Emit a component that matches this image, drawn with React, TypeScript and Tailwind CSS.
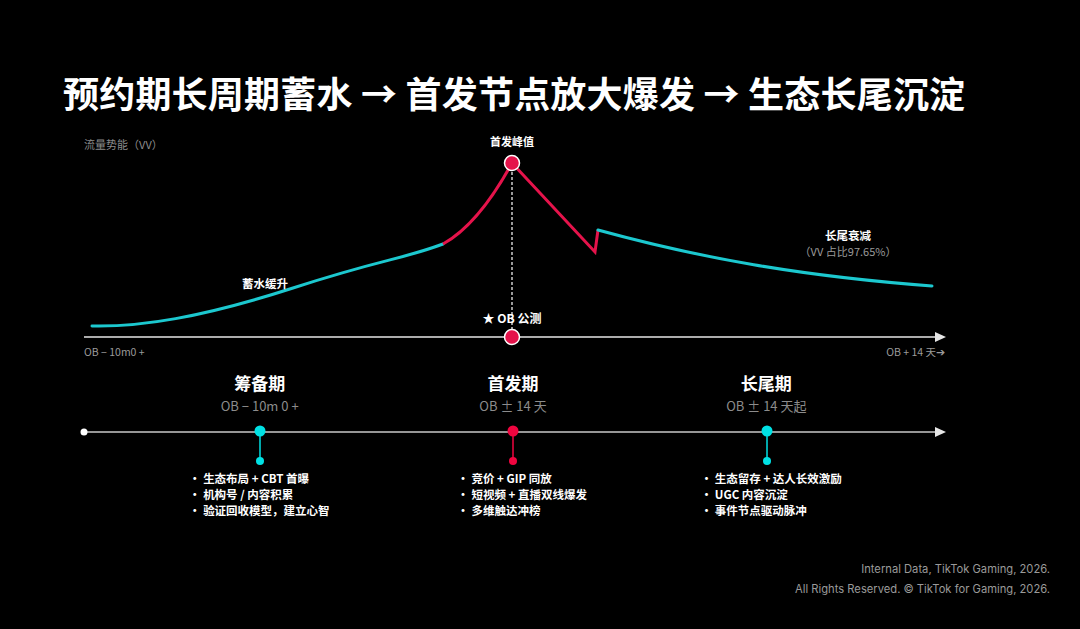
import React from 'react'

const CYAN = '#1cc8cf'
const RED = '#e5134b'

const phases = [
  {
    title: '筹备期',
    sub: 'OB − 10m 0 +',
    offset: 'ml-[56px]',
    items: ['生态布局 + CBT 首曝', '机构号 / 内容积累', '验证回收模型，建立心智'],
  },
  {
    title: '首发期',
    sub: 'OB ± 14 天',
    offset: 'ml-[71px]',
    items: ['竞价 + GIP 同放', '短视频 + 直播双线爆发', '多维触达冲榜'],
  },
  {
    title: '长尾期',
    sub: 'OB ± 14 天起',
    offset: 'ml-[61px]',
    items: ['生态留存 + 达人长效激励', 'UGC 内容沉淀', '事件节点驱动脉冲'],
  },
]

function TrafficChart() {
  return (
    <svg width={1080} height={230} viewBox="0 130 1080 230" className="block">
      <text x={84} y={149} fill="#8a8a8a" fontSize={11}>流量势能（VV）</text>

      {/* rising */}
      <path d="M92,326 C140,327 200,318 293,288 S400,260 443,244" fill="none" stroke={CYAN} strokeWidth={3} strokeLinecap="round" />
      {/* burst */}
      <path d="M443,244 C470,229 494,196 512,163 L595,252 L598,230" fill="none" stroke={RED} strokeWidth={3} strokeLinejoin="miter" />
      {/* long tail */}
      <path d="M598,230 C700,258 800,276 932,286" fill="none" stroke={CYAN} strokeWidth={3} strokeLinecap="round" />

      <line x1={512} y1={172} x2={512} y2={330} stroke="#ffffff" strokeWidth={1.2} strokeDasharray="3 2" />

      <line x1={84} y1={337} x2={938} y2={337} stroke="#e6e6e6" strokeWidth={1.5} />
      <polygon points="935,332 946,337 935,342" fill="#e6e6e6" />

      <circle cx={512} cy={163} r={7.5} fill={RED} stroke="#ffffff" strokeWidth={1.5} />
      <circle cx={512} cy={337} r={7.5} fill={RED} stroke="#ffffff" strokeWidth={1.5} />

      <text x={512} y={146} fill="#ffffff" fontSize={11} fontWeight={700} textAnchor="middle">首发峰值</text>
      <text x={512} y={323} fill="#ffffff" fontSize={12} fontWeight={700} textAnchor="middle">★ OB 公测</text>
      <text x={265} y={288} fill="#ffffff" fontSize={11.5} fontWeight={700} textAnchor="middle">蓄水缓升</text>
      <text x={848} y={240} fill="#ffffff" fontSize={11.5} fontWeight={700} textAnchor="middle">长尾衰减</text>
      <text x={848} y={256} fill="#9a9a9a" fontSize={11} textAnchor="middle">（VV 占比97.65%）</text>
      <text x={84} y={356} fill="#9a9a9a" fontSize={10.5}>OB − 10m0 +</text>
      <text x={945} y={356} fill="#9a9a9a" fontSize={10.5} textAnchor="end">OB + 14 天➔</text>
    </svg>
  )
}

function TimelineAxis() {
  const dots = [
    { x: 260, c: '#00e1e4' },
    { x: 513, c: '#f0053f' },
    { x: 767, c: '#00e1e4' },
  ]
  return (
    <svg width={1080} height={50} viewBox="0 420 1080 50" className="block">
      <line x1={84} y1={432} x2={938} y2={432} stroke="#c9c9c9" strokeWidth={1.5} />
      <polygon points="935,427 946,432 935,437" fill="#e6e6e6" />
      <circle cx={84} cy={432} r={3.5} fill="#ffffff" />
      {dots.map((d) => (
        <g key={d.x}>
          <line x1={d.x} y1={431} x2={d.x} y2={461} stroke={d.c} strokeWidth={1.5} />
          <circle cx={d.x} cy={431} r={5.5} fill={d.c} />
          <circle cx={d.x} cy={461} r={4} fill={d.c} />
        </g>
      ))}
    </svg>
  )
}

export default function App() {
  return (
    <div className="w-[1080px] h-[629px] bg-black text-white overflow-hidden flex flex-col font-['Noto_Sans_CJK_SC','Noto_Sans',sans-serif]">
      <h1 className="mt-[70px] ml-[63px] text-[36px] leading-[44px] font-bold tracking-[0.2px]">
        预约期长周期蓄水 → 首发节点放大爆发 → 生态长尾沉淀
      </h1>

      <div className="mt-[16px]">
        <TrafficChart />
      </div>

      <div className="grid grid-cols-3 w-[760px] ml-[133px] mt-[11px]">
        {phases.map((p) => (
          <div key={p.title} className="flex flex-col items-center">
            <div className="text-[17px] leading-[24px] font-bold">{p.title}</div>
            <div className="mt-px text-[13px] leading-[20px] text-[#8c8c8c]">{p.sub}</div>
          </div>
        ))}
      </div>

      <div className="mt-[4px]">
        <TimelineAxis />
      </div>

      <div className="grid grid-cols-3 w-[760px] ml-[133px]">
        {phases.map((p) => (
          <ul key={p.title} className={`${p.offset} text-[11.5px] leading-[16px] font-bold`}>
            {p.items.map((it) => (
              <li key={it}>· {it}</li>
            ))}
          </ul>
        ))}
      </div>

      <div className="mt-auto mb-[30px] mr-[30px] self-end text-right text-[11.2px] leading-[20px] text-[#9a9a9a] font-['Inter','Noto_Sans',sans-serif]">
        <div>Internal Data, TikTok Gaming, 2026.</div>
        <div>All Rights Reserved. © TikTok for Gaming, 2026.</div>
      </div>
    </div>
  )
}
